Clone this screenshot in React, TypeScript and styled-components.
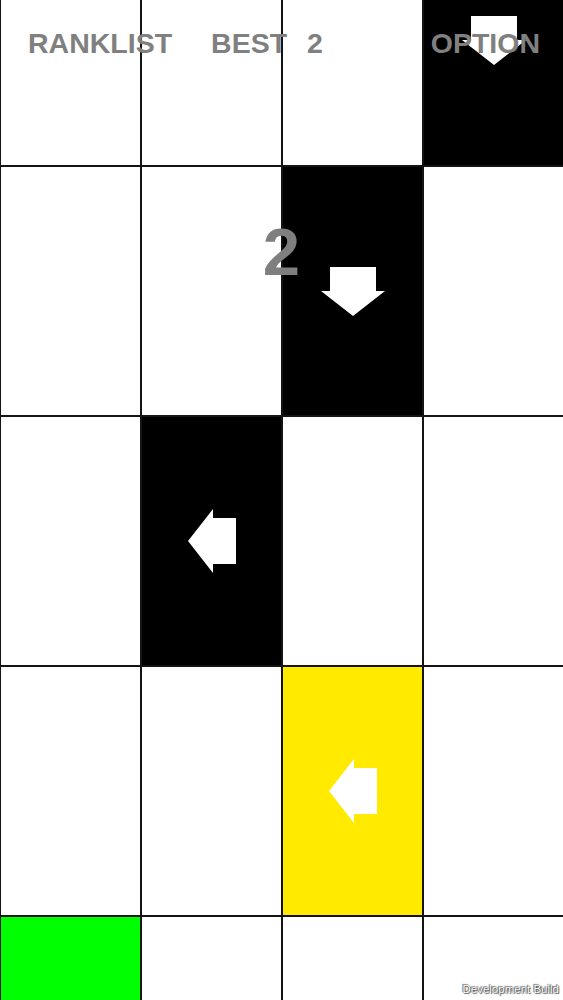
import React from "react";
import styled, { createGlobalStyle } from "styled-components";

type Tone = "white" | "black" | "yellow" | "green";
type Arrow = "down" | "left" | null;

interface TileData {
  tone: Tone;
  arrow?: Arrow;
}

const TONES: Record<Tone, string> = {
  white: "#ffffff",
  black: "#000000",
  yellow: "#ffea00",
  green: "#00ff00",
};

// 위에서부터 한 줄씩 (첫 줄은 화면 위로 잘려있음)
const rows: TileData[][] = [
  [{ tone: "white" }, { tone: "white" }, { tone: "white" }, { tone: "black", arrow: "down" }],
  [{ tone: "white" }, { tone: "white" }, { tone: "black", arrow: "down" }, { tone: "white" }],
  [{ tone: "white" }, { tone: "black", arrow: "left" }, { tone: "white" }, { tone: "white" }],
  [{ tone: "white" }, { tone: "white" }, { tone: "yellow", arrow: "left" }, { tone: "white" }],
  [{ tone: "green" }, { tone: "white" }, { tone: "white" }, { tone: "white" }],
];

const DownArrow = () => (
  <svg width="64" height="49" viewBox="0 0 64 49">
    <polygon points="9,0 55,0 55,24 64,24 32,49 0,24 9,24" fill="#ffffff" />
  </svg>
);

const LeftArrow = () => (
  <svg width="48" height="64" viewBox="0 0 48 64">
    <polygon points="0,32 25,0 25,9 48,9 48,55 25,55 25,64" fill="#ffffff" />
  </svg>
);

const App: React.FC = () => {
  return (
    <Screen>
      <GlobalStyle />
      <Board>
        {rows.map((row, r) =>
          row.map((tile, c) => (
            <Tile key={`${r}-${c}`} $tone={tile.tone} $cut={r === 0}>
              {tile.arrow === "down" && <DownArrow />}
              {tile.arrow === "left" && <LeftArrow />}
            </Tile>
          ))
        )}
      </Board>

      <TopBar>
        <LeftGroup>
          <MenuText>RANKLIST</MenuText>
          <BestGroup>
            <MenuText>BEST</MenuText>
            <MenuText>2</MenuText>
          </BestGroup>
        </LeftGroup>
        <MenuText>OPTION</MenuText>
      </TopBar>

      <Score>2</Score>

      <BuildLabel>Development Build</BuildLabel>
    </Screen>
  );
};

export default App;

const GlobalStyle = createGlobalStyle`
  html, body {
    margin: 0;
    padding: 0;
    background: #ffffff;
  }
  body {
    font-family: "Liberation Sans", Arial, sans-serif;
  }
`;

const Screen = styled.div`
  position: relative;
  width: 563px;
  height: 1000px;
  overflow: hidden;
  background: #ffffff;
`;

const Board = styled.div`
  display: grid;
  grid-template-columns: repeat(4, 1fr);
  grid-template-rows: 165px 248px 248px 248px 1fr;
  gap: 2px;
  padding-left: 1px;
  height: 100%;
  box-sizing: border-box;
  background: #141414;
`;

const Tile = styled.div<{ $tone: Tone; $cut: boolean }>`
  display: flex;
  justify-content: center;
  align-items: ${(p) => (p.$cut ? "flex-end" : "center")};
  padding-bottom: ${(p) => (p.$cut ? "100px" : "0")};
  box-sizing: border-box;
  background: ${(p) => TONES[p.$tone]};

  svg {
    display: block;
  }
`;

const TopBar = styled.div`
  position: absolute;
  top: 26px;
  left: 0;
  right: 0;
  display: flex;
  justify-content: space-between;
  align-items: center;
  padding: 0 23px 0 28px;
`;

const LeftGroup = styled.div`
  display: flex;
  gap: 39px;
`;

const BestGroup = styled.div`
  display: flex;
  gap: 20px;
`;

const MenuText = styled.span`
  font-family: "Liberation Sans", Arial, sans-serif;
  font-size: 28.5px;
  font-weight: 700;
  line-height: 34px;
  color: #808080;
`;

const Score = styled.div`
  position: absolute;
  top: 214px;
  left: 0;
  right: 0;
  text-align: center;
  font-family: "Liberation Sans", Arial, sans-serif;
  font-size: 67px;
  font-weight: 700;
  line-height: 76px;
  color: #7f7f7f;
`;

const BuildLabel = styled.div`
  position: absolute;
  right: 4px;
  bottom: 4px;
  font-family: "Liberation Sans", Arial, sans-serif;
  font-size: 11.5px;
  line-height: 13px;
  color: #ffffff;
  text-shadow: 0 0 1px #333, 1px 1px 1px #555, -1px -1px 1px #777;
`;
